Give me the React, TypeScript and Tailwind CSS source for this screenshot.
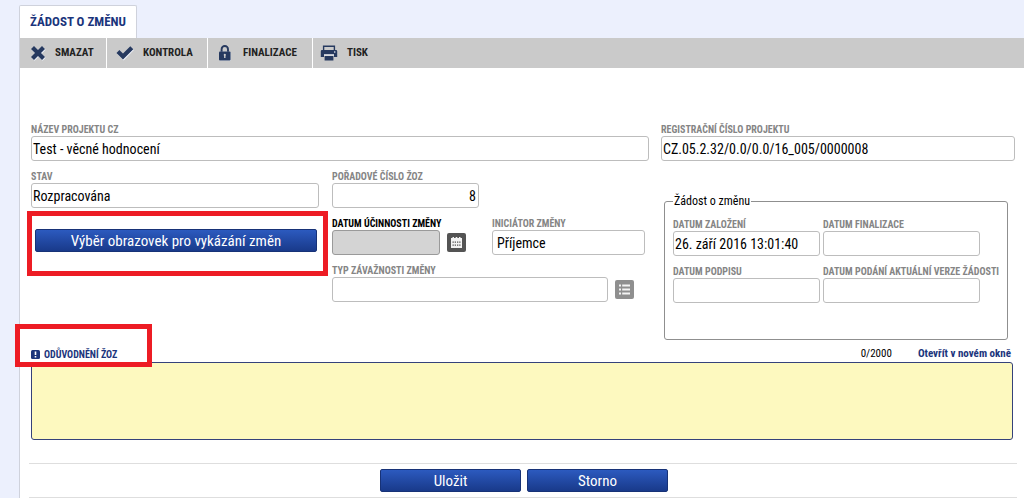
import React, { useId, useState } from 'react';

type FieldProps = {
  label: string;
  value?: string;
  className?: string;
  inputClassName?: string;
  labelClassName?: string;
  action?: React.ReactNode;
};

function Field({
  label,
  value = '',
  className = '',
  inputClassName = 'border-[#bdbdbd] bg-white px-px',
  labelClassName = 'text-[#858585]',
  action,
}: FieldProps) {
  const id = useId();
  return (
    <div className={`min-w-0 ${className}`}>
      <label
        htmlFor={id}
        className={`block h-[13px] text-[10px] leading-[13px] font-bold whitespace-nowrap uppercase ${labelClassName}`}
      >
        {label}
      </label>
      <div className="flex items-center gap-[7px]">
        <input
          id={id}
          type="text"
          defaultValue={value}
          className={`h-[25px] w-full min-w-0 rounded-[3px] border text-[14px] text-black ${inputClassName}`}
        />
        {action}
      </div>
    </div>
  );
}

function ToolButton({ icon, text, className }: { icon: React.ReactNode; text: string; className: string }) {
  return (
    <button
      type="button"
      className={`flex h-full items-center text-[11px] font-bold text-[#222222] uppercase ${className}`}
    >
      {icon}
      {text}
    </button>
  );
}

function CrossIcon() {
  return (
    <svg viewBox="0 0 16 16" className="h-4 w-4 shrink-0" aria-hidden="true">
      <path d="M4 1 8 5l4-4 3 3-4 4 4 4-3 3-4-4-4 4-3-3 4-4-4-4z" fill="#eef2fb" transform="translate(0.6 0.8)" />
      <path d="M4 1 8 5l4-4 3 3-4 4 4 4-3 3-4-4-4 4-3-3 4-4-4-4z" fill="#26395f" />
    </svg>
  );
}

function CheckIcon() {
  return (
    <svg viewBox="0 0 18 16" className="h-4 w-[18px] shrink-0" aria-hidden="true">
      <path d="M0.5 8 3.4 5 7 8.5 14.3 1.2 17.3 4.2 7 14.6z" fill="#eef2fb" transform="translate(0.6 0.8)" />
      <path d="M0.5 8 3.4 5 7 8.5 14.3 1.2 17.3 4.2 7 14.6z" fill="#26395f" />
    </svg>
  );
}

function LockIcon() {
  return (
    <svg viewBox="0 0 14 16" className="h-4 w-[14px] shrink-0" aria-hidden="true">
      <path d="M3.6 7V4.2a3.2 3.2 0 0 1 6.4 0V7" fill="none" stroke="#26395f" strokeWidth="1.9" />
      <rect x="1.4" y="6.8" width="11.6" height="9" rx="1" fill="#eef2fb" />
      <rect x="1" y="6.4" width="11.6" height="9" rx="1" fill="#26395f" />
      <path d="M6.8 8.7a1.2 1.2 0 0 1 .7 2.1v2.3H6.1v-2.3a1.2 1.2 0 0 1 .7-2.1z" fill="#cccccc" />
    </svg>
  );
}

function PrinterIcon() {
  return (
    <svg viewBox="0 0 18 16" className="h-4 w-[18px] shrink-0" aria-hidden="true">
      <path d="M3.6 5.5V1.2h10.8v4.3" fill="none" stroke="#26395f" strokeWidth="1.4" />
      <path d="M2 5h14a1.2 1.2 0 0 1 1.2 1.2V12H14V9.4H4V12H.8V6.2A1.2 1.2 0 0 1 2 5z" fill="#26395f" />
      <path d="M4 9.4h10v1H4z" fill="#eef2fb" />
      <path d="M4.6 11h8.8v4.5H4.6z" fill="#26395f" />
      <rect x="14" y="6.4" width="1.4" height="1.2" fill="#eef2fb" />
    </svg>
  );
}

function CalendarIcon() {
  return (
    <svg viewBox="0 0 19 19" className="h-[19px] w-[19px]" aria-hidden="true">
      <rect width="19" height="19" rx="2" fill="#545454" />
      <path d="M4 5h1.5V4H7v1h1.7V4h1.6v1H12V4h1.5v1H15v10H4z" fill="#f4f4f4" />
      <g fill="#545454">
        <path d="M5.5 8.5h1.3v1.3H5.5zM7.7 8.5H9v1.3H7.7zM10 8.5h1.3v1.3H10zM12.2 8.5h1.3v1.3h-1.3z" />
        <path d="M5.5 11.5h1.3v1.3H5.5zM7.7 11.5H9v1.3H7.7zM10 11.5h1.3v1.3H10zM12.2 11.5h1.3v1.3h-1.3z" />
      </g>
    </svg>
  );
}

function ListIcon() {
  return (
    <svg viewBox="0 0 19 19" className="h-[19px] w-[19px]" aria-hidden="true">
      <rect width="19" height="19" rx="2" fill="#8f8f8f" />
      <path
        d="M4 4.5h2v2H4zM7.2 4.5H15v2H7.2zM4 8.5h2v2H4zM7.2 8.5H15v2H7.2zM4 12.5h2v2H4zM7.2 12.5H15v2H7.2z"
        fill="#f4f4f4"
      />
    </svg>
  );
}

const blueButton =
  'rounded-[2px] border border-[#173277] bg-linear-to-b from-[#2c5abf] to-[#193a8a] pt-px text-[15px] leading-5 text-white';

export default function App() {
  const [reason, setReason] = useState('');
  return (
    <div className="flex min-h-screen flex-col overflow-x-hidden bg-[#ecf0fd] pt-[5px] pl-[19px] font-['Roboto_Condensed','Liberation_Sans_Narrow',Roboto,sans-serif] text-black">
      <nav>
        <button
          type="button"
          className="block h-[33px] rounded-t-[2px] border border-b-0 border-[#cfd2dc] bg-white px-[10px] text-[13px] font-bold text-[#1b357c] uppercase"
        >
          Žádost o změnu
        </button>
      </nav>

      <main className="grow border-l border-[#cfd2dc] bg-white">
        <div className="flex h-[30px] items-stretch divide-x divide-white bg-[#cacaca]" role="toolbar">
          <ToolButton className="w-[87px] gap-[9px] pl-[10px]" icon={<CrossIcon />} text="Smazat" />
          <ToolButton className="w-[101px] gap-[9px] pl-[9px]" icon={<CheckIcon />} text="Kontrola" />
          <ToolButton className="w-[105px] gap-[11px] pl-[10px]" icon={<LockIcon />} text="Finalizace" />
          <ToolButton className="gap-[9px] pl-[7px]" icon={<PrinterIcon />} text="Tisk" />
        </div>

        <form className="pt-[55px] pr-[9px] pl-[11px]" onSubmit={(e) => e.preventDefault()}>
          <div className="grid grid-cols-[618fr_354fr] gap-x-3">
            <div className="flex flex-col gap-[9px]">
              <Field label="Název projektu CZ" value="Test - věcné hodnocení" />
              <div className="grid grid-cols-[288fr_317fr] gap-x-[13px] gap-y-[9px]">
                <Field label="Stav" value="Rozpracována" />
                <Field
                  label="Pořadové číslo ŽoZ"
                  value="8"
                  className="w-[147px]"
                  inputClassName="border-[#bdbdbd] bg-white px-[2px] text-right"
                />
                <div className="relative pt-3 pr-[2px] pl-1">
                  <button type="button" className={`w-full ${blueButton}`}>
                    Výběr obrazovek pro vykázání změn
                  </button>
                  <div className="pointer-events-none absolute -top-[6px] -right-[9px] -left-1 h-[65px] border-[5px] border-[#ed1c24]" />
                </div>
                <div className="flex justify-between">
                  <Field
                    label="Datum účinnosti změny"
                    labelClassName="text-black"
                    className="w-[134px]"
                    inputClassName="border-[#9a9a9a] bg-[#d4d4d4] px-px"
                    action={
                      <button type="button" aria-label="Kalendář" className="shrink-0">
                        <CalendarIcon />
                      </button>
                    }
                  />
                  <Field
                    label="Iniciátor změny"
                    value="Příjemce"
                    className="mr-1 w-[153px]"
                    inputClassName="border-[#bdbdbd] bg-white px-1"
                  />
                </div>
                <Field
                  label="Typ závažnosti změny"
                  className="col-start-2 w-[302px]"
                  action={
                    <button type="button" aria-label="Seznam" className="shrink-0">
                      <ListIcon />
                    </button>
                  }
                />
              </div>
            </div>

            <div>
              <Field label="Registrační číslo projektu" value="CZ.05.2.32/0.0/0.0/16_005/0000008" />
              <fieldset className="mt-[33px] mr-[7px] ml-[3px] h-[146px] rounded-[3px] border border-[#8f8f8f] px-2">
                <legend className="px-px text-[12px] leading-[14px]">Žádost o změnu</legend>
                <div className="grid grid-cols-[147px_157px] gap-x-[3px] gap-y-[9px] pt-[10px]">
                  <Field label="Datum založení" value="26. září 2016 13:01:40" />
                  <Field label="Datum finalizace" />
                  <Field label="Datum podpisu" />
                  <Field label="Datum podání aktuální verze žádosti" />
                </div>
              </fieldset>
            </div>
          </div>

          <div className="relative mt-[6px] flex h-[16px] items-center pr-1 text-[11px]">
            <label
              htmlFor="reason"
              className="flex items-center gap-1 text-[10px] font-bold text-[#1b357c] uppercase"
            >
              <svg viewBox="0 0 9 9" className="h-[9px] w-[9px]" aria-hidden="true">
                <rect width="9" height="9" rx="1.5" fill="#1b357c" />
                <path d="M3.7 1.5h1.6v3.6H3.7zM3.7 6.1h1.6v1.4H3.7z" fill="#ffffff" />
              </svg>
              Odůvodnění ŽoZ
            </label>
            <span className="mr-[26px] ml-auto">{reason.length}/2000</span>
            <a href="#okno" className="font-bold text-[#1b357c]">
              Otevřít v novém okně
            </a>
            <div className="pointer-events-none absolute -top-[22px] -left-4 h-[43px] w-[137px] border-[5px] border-[#ed1c24]" />
          </div>
          <div className="pr-[2px]">
            <textarea
              id="reason"
              maxLength={2000}
              value={reason}
              onChange={(e) => setReason(e.target.value)}
              className="block h-[78px] w-full resize-none rounded-[3px] border border-[#35427a] bg-[#fdf9bf] p-1 text-[14px]"
            />
          </div>
          <div className="mt-[23px] -mr-[2px] -ml-[2px] flex h-[35px] items-center justify-center gap-[6px] border-y border-[#dedede] pl-[2px]">
            <button type="submit" className={`w-[141px] ${blueButton}`}>
              Uložit
            </button>
            <button type="reset" className={`w-[141px] ${blueButton}`}>
              Storno
            </button>
          </div>
        </form>
      </main>
    </div>
  );
}
